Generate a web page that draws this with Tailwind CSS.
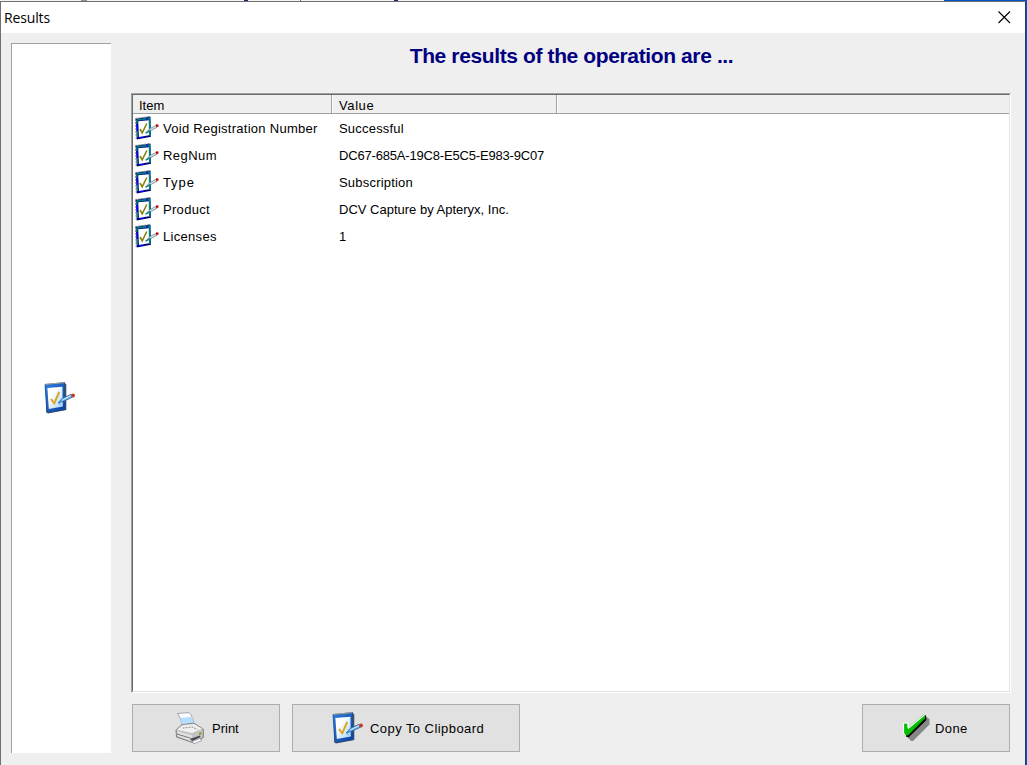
<!DOCTYPE html>
<html lang="en">
<head>
  <meta charset="UTF-8">
  <meta name="viewport" content="width=device-width, initial-scale=1">
  <title>Results</title>
  <script src="https://cdn.jsdelivr.net/npm/@tailwindcss/browser@4"></script>
</head>
<body class="h-screen overflow-hidden bg-[#0054c8] font-['Liberation_Sans',Arial,sans-serif] text-black">

<!-- shared icons -->
<svg class="absolute size-0" xmlns="http://www.w3.org/2000/svg">
  <defs>
    <linearGradient id="board-blue" x1="0" y1="0" x2="1" y2="1">
      <stop offset="0" stop-color="#2f7fe0" />
      <stop offset="1" stop-color="#0a3f9c" />
    </linearGradient>
    <linearGradient id="board-paper" x1="0" y1="0" x2="1" y2="1">
      <stop offset="0.3" stop-color="#ffffff" />
      <stop offset="1" stop-color="#a9d5f8" />
    </linearGradient>
    <symbol id="icon-board" viewBox="0 0 32 32">
      <path d="M1.5 2.8L20.5 0.8L22.3 2.5V28L4 31.5L2.2 30Z" fill="#4e5258" />
      <path d="M1 2.5L20.5 0.6L21.3 27.5L3 30.6Z" fill="url(#board-blue)" stroke="#164a94" stroke-width="0.8" />
      <path d="M1.5 2.4L20 0.7" stroke="#a8a49a" stroke-width="1" />
      <path d="M3.4 6L18.4 4.7L18.8 24.6L4.8 27Z" fill="url(#board-paper)" />
      <path d="M7 17L10.2 21.3L15.2 10" fill="none" stroke="#dda722" stroke-width="2" />
      <path d="M14.3 20.8L18 16.5L27 12.3L28.3 15.3L19 19.5Z" fill="#6fb4ee" stroke="#2860a4" stroke-width="0.8" />
      <path d="M18.5 17.8L27 13.6" stroke="#d6efff" stroke-width="1" />
      <path d="M14.5 21L16.5 23" stroke="#59b8ee" stroke-width="1.2" />
      <circle cx="29" cy="13.4" r="2" fill="#c83a28" />
    </symbol>
    <symbol id="icon-board-small" viewBox="0 0 24 24">
      <path d="M0.8 2.7L15.4 0.6L16 20.8L1.8 23.4Z" fill="#000080" />
      <path d="M0.3 2.5L15.2 0.6M0.5 3L1.3 23" fill="none" stroke="#808080" stroke-width="1" stroke-dasharray="2 1" />
      <path d="M1.8 4L14.6 2.3L15 20" fill="none" stroke="#008080" stroke-width="1.7" />
      <path d="M1.8 4V8M2.6 15V21" stroke="#008080" stroke-width="1.4" />
      <path d="M2.2 8V15M4 21.6L9 20.8M11 3L13 2.7" stroke="#0000ff" stroke-width="1.2" />
      <path d="M3.2 5.3L13.8 4.2L14 19.2L4 21Z" fill="#ffffff" />
      <path d="M5 13L7.2 16.8L11.8 7.5" fill="none" stroke="#808000" stroke-width="1.5" />
      <path d="M11 17L14 13.2L21 9.3L22 11.3L15 15Z" fill="#c8e4ee" stroke="#808080" stroke-width="0.8" />
      <path d="M10.5 17.2L15.5 14.4" stroke="#008080" stroke-width="1.3" />
      <rect x="21" y="8.4" width="2.4" height="2.4" fill="#c00000" />
    </symbol>
  </defs>
</svg>

<!-- strip of the window behind -->
<div class="flex h-px w-[944px] bg-[#f4f4f4]">
  <span class="ml-[81px] h-px w-[6px] bg-[#909090]"></span>
  <span class="ml-[157px] h-px w-[4px] bg-[#202080]"></span>
  <span class="ml-[52px] h-px w-px bg-[#9040c0]"></span>
  <span class="ml-[93px] h-px w-[4px] bg-[#202080]"></span>
</div>

<div class="flex h-[764px] w-[1026px] flex-col border-l border-t border-r border-l-[#707070] border-t-[#707070] border-r-[#173f70] bg-[#efefef]">

  <!-- title bar -->
  <header class="flex h-[31px] shrink-0 items-center justify-between bg-white pl-[3px] pr-[14px]">
    <h1 class="font-['Open_Sans',sans-serif] text-[14px] tracking-[-0.15px]">Results</h1>
    <svg class="size-[13px]" viewBox="0 0 13 13" fill="none" stroke="#000" stroke-width="1.1">
      <path d="M0.5 0.5L12 12M12 0.5L0.5 12" />
    </svg>
  </header>

  <div class="flex min-h-0 flex-1 pl-[10px] pt-[10px] pb-[12px] pr-[14px]">
    <!-- side panel -->
    <aside class="flex w-[100px] shrink-0 items-center justify-center border-l border-t border-[#a0a0a0] bg-white pr-[3px] pb-[2px]">
      <svg class="size-8"><use href="#icon-board" /></svg>
    </aside>

    <main class="ml-5 flex min-w-0 flex-1 flex-col">
      <h2 class="h-[50px] pt-px pl-px text-center text-[21px] leading-6 font-bold tracking-[-0.38px] text-[#000080]">The results of the operation are ...</h2>

      <!-- result list -->
      <div class="h-[600px] border border-t-[#a0a0a0] border-l-[#a0a0a0] border-r-white border-b-white">
        <div class="h-full border border-t-[#696969] border-l-[#696969] border-r-[#e3e3e3] border-b-[#e3e3e3] bg-white text-[13px]">
          <div class="flex h-[19px] border-b border-[#a0a0a0] bg-[#efefef] leading-[21px]">
            <div class="w-[199px] border-r border-[#a0a0a0] pl-[6px]">Item</div>
            <div class="w-[225px] border-l border-r border-l-white border-r-[#a0a0a0] pl-[6px] tracking-[0.6px]">Value</div>
            <div class="flex-1 border-l border-white"></div>
          </div>
          <div class="grid grid-cols-[206px_1fr] auto-rows-[27px] items-center leading-[18px]">
            <div class="flex items-center gap-1 pl-[2px]"><svg class="size-6"><use href="#icon-board-small" /></svg><span class="pt-[2px] tracking-[0.27px]">Void Registration Number</span></div>
            <div class="pt-[2px] tracking-[0.2px]">Successful</div>
            <div class="flex items-center gap-1 pl-[2px]"><svg class="size-6"><use href="#icon-board-small" /></svg><span class="pt-[2px] tracking-[0.45px]">RegNum</span></div>
            <div class="pt-[2px] tracking-[-0.18px]">DC67-685A-19C8-E5C5-E983-9C07</div>
            <div class="flex items-center gap-1 pl-[2px]"><svg class="size-6"><use href="#icon-board-small" /></svg><span class="pt-[2px] tracking-[0.9px]">Type</span></div>
            <div class="pt-[2px] tracking-[0.2px]">Subscription</div>
            <div class="flex items-center gap-1 pl-[2px]"><svg class="size-6"><use href="#icon-board-small" /></svg><span class="pt-[2px] tracking-[0.3px]">Product</span></div>
            <div class="pt-[2px]">DCV Capture by Apteryx, Inc.</div>
            <div class="flex items-center gap-1 pl-[2px]"><svg class="size-6"><use href="#icon-board-small" /></svg><span class="pt-[2px] tracking-[0.3px]">Licenses</span></div>
            <div class="pt-[2px]">1</div>
          </div>
        </div>
      </div>

      <!-- buttons -->
      <div class="mt-[11px] flex h-12 px-px text-[13px]">
        <button class="flex w-[148px] items-center border border-[#adadad] bg-[#e1e1e1] pl-[42px]">
          <svg class="h-8 w-[30px]" viewBox="0 0 30 32">
            <path d="M2.5 1.5L14 0.6Q18 4 19 12.5L7 14Q6.5 6 2.5 1.5Z" fill="#fbfdff" stroke="#8d9299" stroke-width="0.8" />
            <path d="M5.4 6L17.2 4.8L18.8 12.2L7 13.6Z" fill="#b3dcff" />
            <path d="M1 18L7 12.7L19 11.2L28.3 17V25.5L19 31L1.5 25Z" fill="#c4c4c4" stroke="#666" stroke-width="0.8" />
            <path d="M1.5 18L7.5 13L19 11.7L27.8 17L17 21.5Z" fill="#f1f1f1" stroke="#aaa" stroke-width="0.5" />
            <path d="M7.5 16L17.5 15L22.5 17.5" fill="none" stroke="#a0a0a0" stroke-width="1.2" stroke-dasharray="2 1" />
            <path d="M2 19L17 23.5V29.5L2.5 24Z" fill="#e2e2e2" />
            <path d="M2 22L16.5 26.5" stroke="#777" stroke-width="1" />
            <path d="M15 27L25 23.5L25.5 25L17 29Z" fill="#454545" />
            <path d="M16.5 30L24.5 26.5L27 28.5L19.5 31.5Z" fill="#fff" stroke="#747b93" stroke-width="0.6" />
            <path d="M24 22L26.5 21" stroke="#78a832" stroke-width="2" />
          </svg>
          <span class="ml-[7px] pt-[2px]">Print</span>
        </button>
        <button class="ml-3 flex w-[228px] items-center border border-[#adadad] bg-[#e1e1e1] pl-[39px]">
          <svg class="size-8"><use href="#icon-board" /></svg>
          <span class="ml-[6px] pt-[2px] tracking-[0.44px]">Copy To Clipboard</span>
        </button>
        <button class="ml-auto flex w-[148px] items-center border border-[#adadad] bg-[#e1e1e1] pl-[40px]">
          <svg class="h-[28px] w-[27px]" viewBox="0 0 27 28">
            <path d="M4.5 23L8 27H10L26.5 10.5V5L23.5 3Z" fill="#868686" />
            <path d="M0.5 9.5H4.5V14L20.5 0.5L22 1L22.5 5L6 22H3.5L0.5 18Z" fill="#00c000" />
            <path d="M5 21.8L22.5 4.3V1.5L23 6L5.5 23L3 22Z" fill="#000" stroke="#000" stroke-width="0.8" />
            <path d="M0.5 19.5V9.5H1.5M5 14.5L21.5 0.8" fill="none" stroke="#fff" stroke-width="1.2" />
            <path d="M2 8.8H5V13.5" fill="none" stroke="#fff" stroke-width="1" />
          </svg>
          <span class="ml-[5px] pt-[2px] tracking-[0.4px]">Done</span>
        </button>
      </div>
    </main>
  </div>
</div>

</body>
</html>
